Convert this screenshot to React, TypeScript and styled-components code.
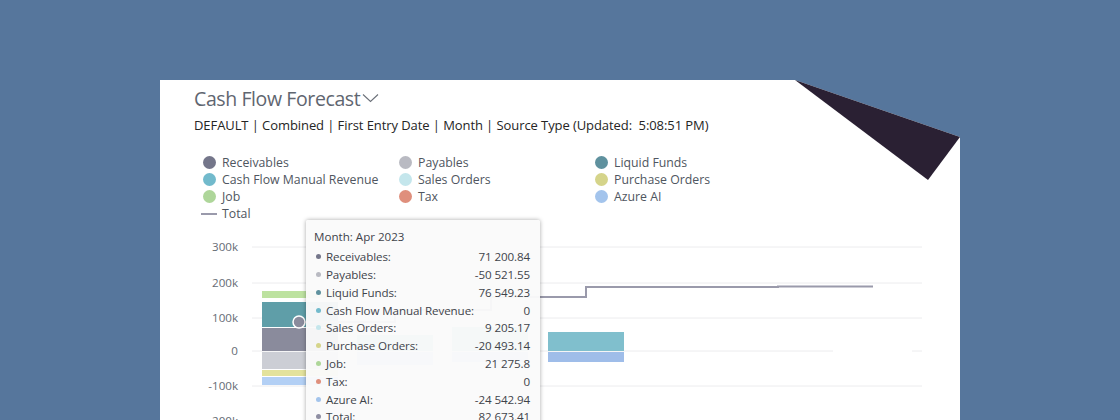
import React from 'react';
import styled, { createGlobalStyle } from 'styled-components';

const GlobalStyle = createGlobalStyle`
  html, body {
    margin: 0;
    padding: 0;
    background: #56769c;
  }
  body {
    font-family: "Open Sans", "Liberation Sans", sans-serif;
  }
`;

const Page = styled.div`
  width: 1120px;
  height: 420px;
  padding: 80px 160px 0;
  box-sizing: border-box;
  overflow: hidden;
`;

const Card = styled.div`
  position: relative;
  height: 340px;
  padding: 6px 0 0 34px;
  box-sizing: border-box;
  background: #ffffff;
  overflow: hidden;
`;

const TitleRow = styled.div`
  display: flex;
  align-items: center;
  gap: 2px;
  height: 24px;
`;

const Title = styled.h1`
  margin: 0;
  font-size: 19.5px;
  font-weight: 400;
  letter-spacing: -0.4px;
  color: #5f6670;
  white-space: nowrap;
`;

const Subtitle = styled.div`
  margin-top: 6px;
  font-size: 13px;
  letter-spacing: -0.08px;
  line-height: 18px;
  color: #252525;
  white-space: pre;
`;

const Legend = styled.div`
  display: grid;
  grid-template-columns: repeat(3, 196px);
  grid-auto-rows: 17px;
  margin: 20px 0 0 9px;
`;

const LegendItem = styled.div`
  display: flex;
  align-items: center;
  gap: 6px;
  font-size: 12.3px;
  color: #4f5660;
  white-space: nowrap;
`;

const LegendDot = styled.span<{ $color: string }>`
  width: 13px;
  height: 13px;
  border-radius: 50%;
  background: ${(p) => p.$color};
`;

const LegendDash = styled.span`
  width: 16px;
  height: 2px;
  margin: 0 -1px 0 -2px;
  background: #9a9aab;
`;

const Chart = styled.svg`
  display: block;
  margin: 7px 0 0 -34px;
`;

const AxisLabel = styled.text`
  font-size: 11.6px;
  fill: #666c75;
  text-anchor: end;
`;

const Tooltip = styled.div`
  position: absolute;
  left: 146px;
  top: 140px;
  width: 234px;
  height: 230px;
  padding: 8px 10px 0 8px;
  box-sizing: border-box;
  background: rgba(250, 250, 250, 0.96);
  border-radius: 2px;
  box-shadow: 0 0 4px rgba(0, 0, 0, 0.35);
`;

const TooltipTitle = styled.div`
  height: 20px;
  font-size: 11.6px;
  line-height: 18px;
  color: #3f444b;
`;

const TooltipRow = styled.div`
  display: flex;
  align-items: center;
  height: 17.78px;
  font-size: 11.6px;
  letter-spacing: -0.1px;
  color: #3f444b;
  white-space: nowrap;
`;

const TooltipDot = styled.span<{ $color: string }>`
  flex: none;
  width: 5px;
  height: 5px;
  margin: 0 5px 0 2px;
  border-radius: 50%;
  background: ${(p) => p.$color};
`;

const TooltipValue = styled.span`
  margin-left: auto;
`;

const legend = [
  { label: 'Receivables', color: '#74768a' },
  { label: 'Payables', color: '#b9bac2' },
  { label: 'Liquid Funds', color: '#5f919e' },
  { label: 'Cash Flow Manual Revenue', color: '#72bacc' },
  { label: 'Sales Orders', color: '#c4e6ec' },
  { label: 'Purchase Orders', color: '#d5d48a' },
  { label: 'Job', color: '#aed69a' },
  { label: 'Tax', color: '#df8f7c' },
  { label: 'Azure AI', color: '#a3c4ec' },
];

const tooltipRows = [
  { label: 'Receivables:', value: '71 200.84', color: '#74768a' },
  { label: 'Payables:', value: '-50 521.55', color: '#b9bac2' },
  { label: 'Liquid Funds:', value: '76 549.23', color: '#5f919e' },
  { label: 'Cash Flow Manual Revenue:', value: '0', color: '#72bacc' },
  { label: 'Sales Orders:', value: '9 205.17', color: '#c4e6ec' },
  { label: 'Purchase Orders:', value: '-20 493.14', color: '#d5d48a' },
  { label: 'Job:', value: '21 275.8', color: '#aed69a' },
  { label: 'Tax:', value: '0', color: '#df8f7c' },
  { label: 'Azure AI:', value: '-24 542.94', color: '#a3c4ec' },
  { label: 'Total:', value: '82 673.41', color: '#8f8fa3' },
];

const ticks = [
  { label: '300k', y: 18 },
  { label: '200k', y: 54 },
  { label: '100k', y: 89 },
  { label: '0', y: 122 },
  { label: '-100k', y: 157 },
  { label: '-200k', y: 192 },
];

// chart coordinates: the svg starts at the card's left edge, 229px from the top of the page
const bars = [
  { x: 102, y: 62, h: 7, fill: '#bde2a0' },
  { x: 102, y: 73, h: 25, fill: '#5f9ea8' },
  { x: 102, y: 99, h: 23, fill: '#8a8b9c' },
  { x: 102, y: 123, h: 17, fill: '#ccced5' },
  { x: 102, y: 141, h: 6, fill: '#e3e29c' },
  { x: 102, y: 148, h: 8, fill: '#b3d0f5' },
  { x: 197, y: 106, h: 16, fill: '#85c2cf' },
  { x: 197, y: 123, h: 13, fill: '#a3c1ea' },
  { x: 292, y: 98, h: 24, fill: '#85c2cf' },
  { x: 292, y: 123, h: 10, fill: '#a3c1ea' },
  { x: 388, y: 103, h: 19, fill: '#80bfcd' },
  { x: 388, y: 123, h: 10, fill: '#9fbde9' },
];

const Fold = () => (
  <svg
    width="165"
    height="100"
    viewBox="0 0 165 100"
    style={{ position: 'absolute', right: 0, top: 0 }}
  >
    <polygon points="0,0 165,0 165,57" fill="#56769c" />
    <polygon points="0,0 165,57 133,100" fill="#2a2033" />
  </svg>
);

const Chevron = () => (
  <svg width="18" height="10" viewBox="0 0 18 10" fill="none">
    <path d="M1 1.5 L8.5 8.5 L16 1.5" stroke="#6b7079" strokeWidth="1.1" />
  </svg>
);

const App: React.FC = () => {
  return (
    <Page>
      <GlobalStyle />
      <Card>
        <TitleRow>
          <Title>Cash Flow Forecast</Title>
          <Chevron />
        </TitleRow>
        <Subtitle>DEFAULT | Combined | First Entry Date | Month | Source Type (Updated:  5:08:51 PM)</Subtitle>
        <Legend>
          {legend.map((item) => (
            <LegendItem key={item.label}>
              <LegendDot $color={item.color} />
              {item.label}
            </LegendItem>
          ))}
          <LegendItem>
            <LegendDash />
            Total
          </LegendItem>
        </Legend>
        <Chart width="800" height="210" viewBox="0 0 800 210">
          {ticks.map((t) => (
            <g key={t.label}>
              <line x1="92" x2="762" y1={t.y} y2={t.y} stroke="#ececee" />
              <AxisLabel x="78" y={t.y + 4}>{t.label}</AxisLabel>
            </g>
          ))}
          <rect x="673" y="120" width="79" height="4" fill="#ffffff" />
          {bars.map((b) => (
            <rect key={`${b.x}-${b.y}`} x={b.x} y={b.y} width="76" height={b.h} fill={b.fill} />
          ))}
          <polyline
            points="140,93 235,93 235,81 331,81 331,68 426,68 426,58 618,58 618,57.5 713,57.5"
            fill="none"
            stroke="#9a9aab"
            strokeWidth="2"
          />
          <circle cx="139" cy="93" r="6" fill="#8a8b9c" stroke="#ffffff" strokeWidth="1.5" />
        </Chart>
        <Tooltip>
          <TooltipTitle>Month: Apr 2023</TooltipTitle>
          {tooltipRows.map((row) => (
            <TooltipRow key={row.label}>
              <TooltipDot $color={row.color} />
              {row.label}
              <TooltipValue>{row.value}</TooltipValue>
            </TooltipRow>
          ))}
        </Tooltip>
        <Fold />
      </Card>
    </Page>
  );
};

export default App;
